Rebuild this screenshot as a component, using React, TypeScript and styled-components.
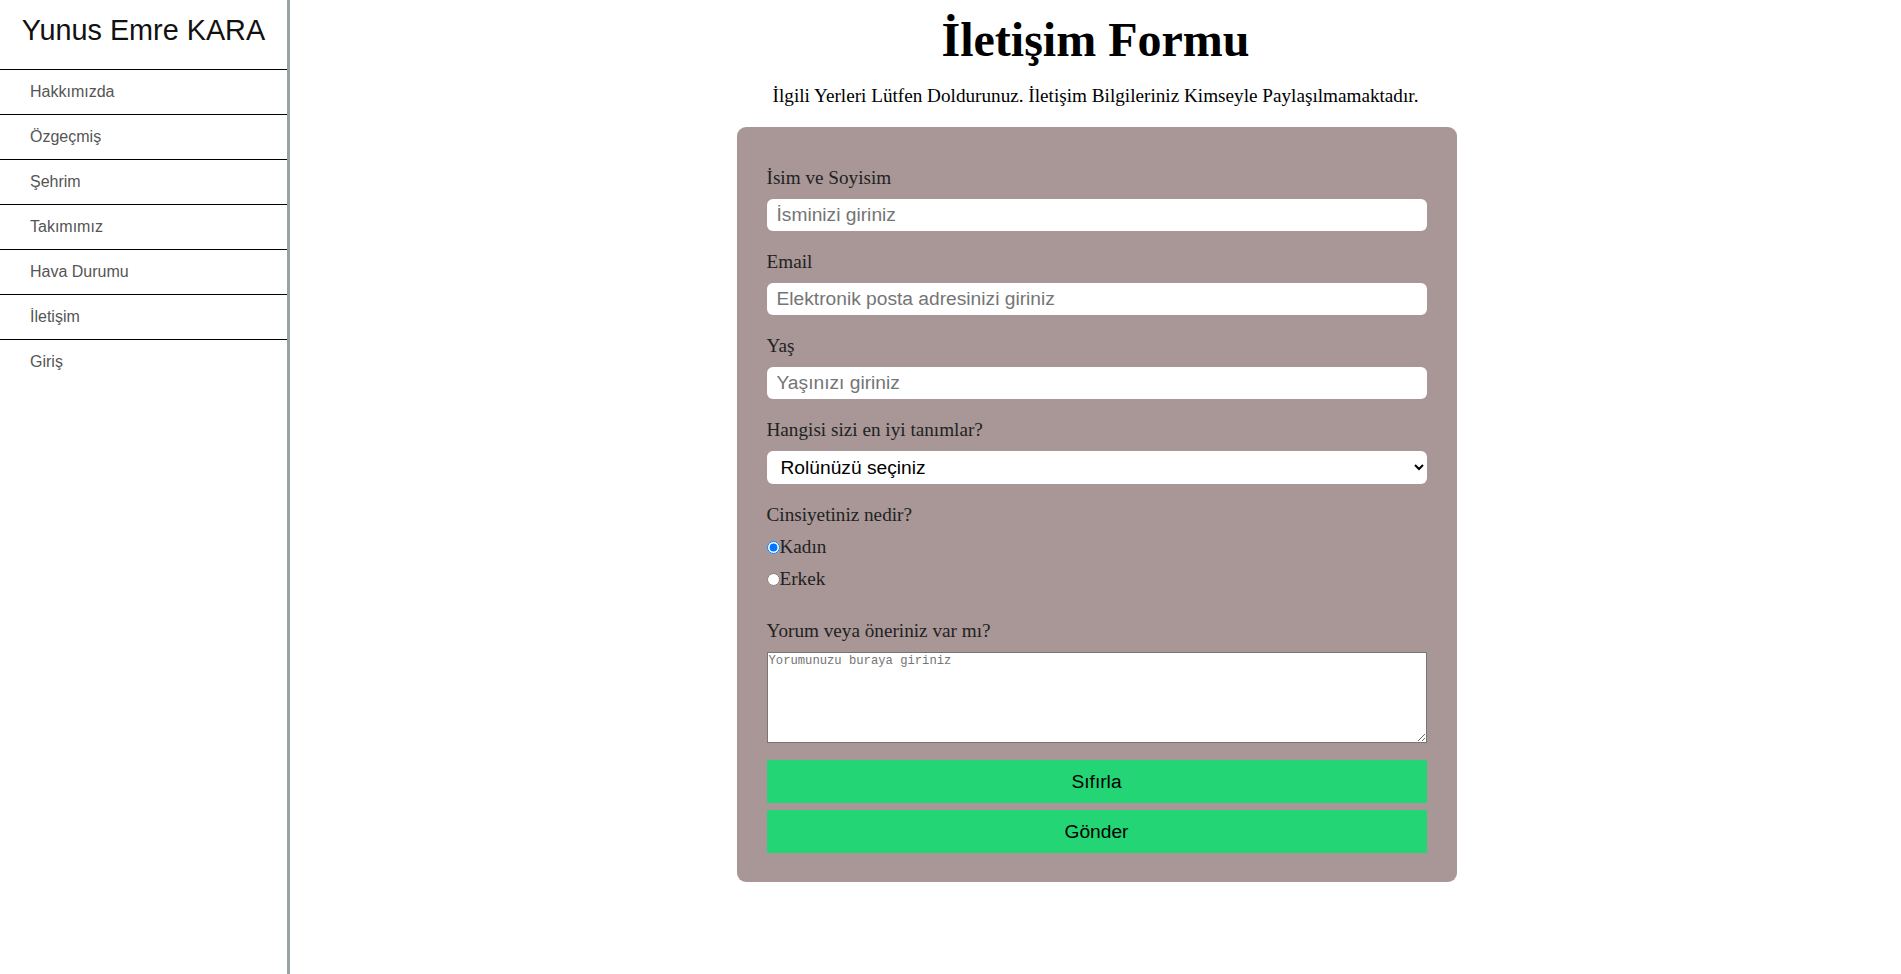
import React from "react";
import styled, { createGlobalStyle } from "styled-components";

const GlobalStyle = createGlobalStyle`
  html, body {
    margin: 0;
    padding: 0;
    background: #ffffff;
  }
  body {
    font-family: "Liberation Serif", "Times New Roman", serif;
    color: #000;
  }
  * { box-sizing: border-box; }
`;

const Layout = styled.div`
  display: flex;
  min-height: 100vh;
`;

const Sidebar = styled.aside`
  width: 290px;
  flex-shrink: 0;
  border-right: 3px solid #95a5a6;
  display: flex;
  flex-direction: column;
`;

const Brand = styled.div`
  font-family: "Liberation Sans", Arial, sans-serif;
  font-size: 28.8px;
  line-height: 33px;
  color: #111;
  text-align: center;
  padding: 14px 0 22px;
`;

const NavList = styled.nav`
  display: flex;
  flex-direction: column;
`;

const NavItem = styled.a`
  display: flex;
  align-items: center;
  height: 45px;
  padding-left: 30px;
  border-top: 1px solid #000;
  font-family: "Liberation Sans", Arial, sans-serif;
  font-size: 16px;
  color: #555;
  text-decoration: none;
  cursor: pointer;
`;

const Main = styled.main`
  flex: 1;
  display: flex;
  flex-direction: column;
  align-items: center;
  padding-bottom: 40px;
`;

const Title = styled.h1`
  margin: 12px 0 0;
  font-size: 48px;
  line-height: 55px;
  font-weight: bold;
`;

const Subtitle = styled.p`
  margin: 18px 0 0;
  font-size: 19.2px;
  line-height: 22px;
`;

const Panel = styled.form`
  margin: 20px 0 0 2px;
  width: 720px;
  background: #a89796;
  border-radius: 9px;
  padding: 40px 30px 29px;
  display: flex;
  flex-direction: column;
`;

const Label = styled.label<{ $gap?: number }>`
  display: block;
  font-size: 19.2px;
  line-height: 22px;
  color: #222;
  margin-bottom: ${(p) => p.$gap ?? 10}px;
`;

const TextInput = styled.input`
  width: 100%;
  height: 32px;
  border: none;
  border-radius: 6px;
  background: #fff;
  padding: 0 10px;
  margin: 0 0 20px;
  font-family: "Liberation Sans", Arial, sans-serif;
  font-size: 19.2px;
  color: #000;
  outline: none;
  &::placeholder {
    color: #757575;
  }
`;

const Select = styled.select`
  width: 100%;
  height: 33px;
  border: none;
  border-radius: 6px;
  background-color: #fff;
  padding: 0 6px 0 10px;
  margin: 0 0 20px;
  font-family: "Liberation Sans", Arial, sans-serif;
  font-size: 19.2px;
  color: #000;
  outline: none;
`;

const RadioRow = styled.label`
  display: flex;
  align-items: center;
  height: 22px;
  margin-top: 10px;
  font-size: 19.2px;
  line-height: 22px;
  color: #222;
`;

const Radio = styled.input`
  width: 13px;
  height: 13px;
  margin: 0;
`;

const RadioGroup = styled.div`
  display: flex;
  flex-direction: column;
  margin-bottom: 30px;
`;

const TextArea = styled.textarea`
  width: 100%;
  height: 91px;
  border: 1px solid #767676;
  background: #fff;
  padding: 1px;
  margin: 0;
  font-family: "Liberation Mono", "DejaVu Sans Mono", monospace;
  font-size: 12.2px;
  display: block;
  &::placeholder {
    color: #757575;
  }
`;

const Button = styled.button<{ $top: number }>`
  width: 100%;
  height: 43px;
  border: none;
  background: #23d574;
  margin-top: ${(p) => p.$top}px;
  font-family: "Liberation Sans", Arial, sans-serif;
  font-size: 19.2px;
  color: #000;
  cursor: pointer;
`;

const navItems = [
  "Hakkımızda",
  "Özgeçmiş",
  "Şehrim",
  "Takımımız",
  "Hava Durumu",
  "İletişim",
  "Giriş",
];

export default function App() {
  return (
    <>
      <GlobalStyle />
      <Layout>
        <Sidebar>
          <Brand>Yunus Emre KARA</Brand>
          <NavList>
            {navItems.map((item) => (
              <NavItem key={item}>{item}</NavItem>
            ))}
          </NavList>
        </Sidebar>
        <Main>
          <Title>İletişim Formu</Title>
          <Subtitle>
            İlgili Yerleri Lütfen Doldurunuz. İletişim Bilgileriniz Kimseyle
            Paylaşılmamaktadır.
          </Subtitle>
          <Panel onSubmit={(e) => e.preventDefault()}>
            <Label htmlFor="isim">İsim ve Soyisim</Label>
            <TextInput id="isim" type="text" placeholder="İsminizi giriniz" />
            <Label htmlFor="email">Email</Label>
            <TextInput
              id="email"
              type="email"
              placeholder="Elektronik posta adresinizi giriniz"
            />
            <Label htmlFor="yas">Yaş</Label>
            <TextInput id="yas" type="text" placeholder="Yaşınızı giriniz" />
            <Label htmlFor="rol">Hangisi sizi en iyi tanımlar?</Label>
            <Select id="rol" defaultValue="">
              <option value="">Rolünüzü seçiniz</option>
              <option value="ogrenci">Öğrenci</option>
              <option value="calisan">Çalışan</option>
            </Select>
            <Label $gap={0}>Cinsiyetiniz nedir?</Label>
            <RadioGroup>
              <RadioRow>
                <Radio type="radio" name="cinsiyet" defaultChecked />
                Kadın
              </RadioRow>
              <RadioRow>
                <Radio type="radio" name="cinsiyet" />
                Erkek
              </RadioRow>
            </RadioGroup>
            <Label htmlFor="yorum">Yorum veya öneriniz var mı?</Label>
            <TextArea id="yorum" placeholder="Yorumunuzu buraya giriniz" />
            <Button type="reset" $top={17}>Sıfırla</Button>
            <Button type="submit" $top={7}>Gönder</Button>
          </Panel>
        </Main>
      </Layout>
    </>
  );
}
